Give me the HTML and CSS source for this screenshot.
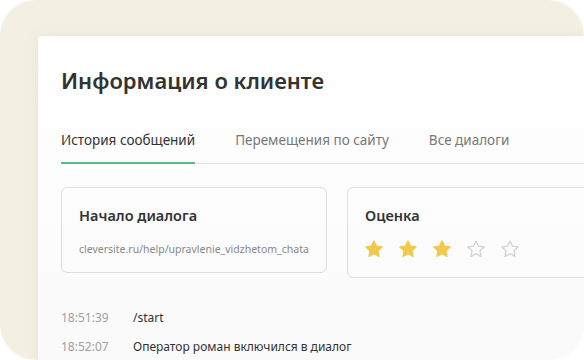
FILE: index.html
```html
<!DOCTYPE html>
<html lang="ru">

<head>
  <meta charset="UTF-8" />
  <meta name="viewport" content="width=device-width, initial-scale=1.0" />
  <title>Информация о клиенте</title>
  <link rel="stylesheet" href="styles.css">
</head>

<body>
  <div class="frame">
    <div class="panel">
      <h1 class="title">Информация о клиенте</h1>

      <div class="tabs">
        <div class="tab active">История сообщений</div>
        <div class="tab">Перемещения по сайту</div>
        <div class="tab">Все диалоги</div>
      </div>

      <div class="cards">
        <div class="card card-start">
          <h3>Начало диалога</h3>
          <div class="link">cleversite.ru/help/upravlenie_vidzhetom_chata</div>
        </div>
        <div class="card card-rate">
          <h3>Оценка</h3>
          <div class="stars">
            <svg class="star on" viewBox="0 0 24 24"><polygon points="12,2.5 15,8.6 21.7,9.5 16.8,14.2 18,20.8 12,17.6 6,20.8 7.2,14.2 2.3,9.5 9,8.6" /></svg>
            <svg class="star on" viewBox="0 0 24 24"><polygon points="12,2.5 15,8.6 21.7,9.5 16.8,14.2 18,20.8 12,17.6 6,20.8 7.2,14.2 2.3,9.5 9,8.6" /></svg>
            <svg class="star on" viewBox="0 0 24 24"><polygon points="12,2.5 15,8.6 21.7,9.5 16.8,14.2 18,20.8 12,17.6 6,20.8 7.2,14.2 2.3,9.5 9,8.6" /></svg>
            <svg class="star" viewBox="0 0 24 24"><polygon points="12,2.5 15,8.6 21.7,9.5 16.8,14.2 18,20.8 12,17.6 6,20.8 7.2,14.2 2.3,9.5 9,8.6" /></svg>
            <svg class="star" viewBox="0 0 24 24"><polygon points="12,2.5 15,8.6 21.7,9.5 16.8,14.2 18,20.8 12,17.6 6,20.8 7.2,14.2 2.3,9.5 9,8.6" /></svg>
          </div>
        </div>
      </div>

      <div class="log">
        <div class="time">18:51:39</div>
        <div class="msg">/start</div>
        <div class="time">18:52:07</div>
        <div class="msg">Оператор роман включился в диалог</div>
      </div>
    </div>
  </div>
</body>

</html>
```

FILE: styles.css
```css
body {
  margin: 0;
  background: #ffffff;
  font-family: "Noto Sans", "Open Sans", sans-serif;
  color: #333;
}

.frame {
  width: 584px;
  height: 360px;
  box-sizing: border-box;
  padding: 36px 0 0 38px;
  background: #f3efe2;
  border-radius: 36px;
  overflow: hidden;
}

.panel {
  height: 100%;
  padding-left: 23px;
  background: linear-gradient(180deg, #ffffff 0%, #fafafa 100%);
  border-radius: 4px 0 0 0;
  box-shadow: 0 0 14px rgba(120, 100, 60, 0.08);
}

.title {
  margin: 0;
  padding-top: 29px;
  font-size: 22px;
  line-height: 30px;
  font-weight: 600;
  color: #333;
}

.tabs {
  display: flex;
  gap: 40px;
  margin-top: 35px;
  border-bottom: 1px solid #e2e2e2;
}

.tab {
  font-size: 13.5px;
  line-height: 20px;
  padding-bottom: 13px;
  color: #777;
}

.tab.active {
  color: #333;
  box-shadow: inset 0 -2px 0 #5cb88a;
  margin-bottom: -1px;
  padding-bottom: 14px;
}

.cards {
  display: flex;
  gap: 20px;
  margin-top: 23px;
  align-items: flex-start;
}

.card {
  border: 1px solid #dedede;
  border-radius: 6px;
  padding: 17px 17px 0;
  box-sizing: border-box;
  flex-shrink: 0;
}

.card h3 {
  margin: 0;
  font-size: 14.5px;
  line-height: 20px;
  font-weight: 600;
  color: #333;
}

.card-start {
  width: 266px;
  height: 86px;
}

.card-rate {
  width: 260px;
  height: 91px;
}

.link {
  margin-top: 17px;
  font-size: 10.5px;
  color: #888;
}

.stars {
  display: flex;
  gap: 14px;
  margin-top: 14px;
  margin-left: -1px;
}

.star {
  width: 20px;
  height: 20px;
}

.star polygon {
  fill: none;
  stroke: #d3d3d3;
  stroke-width: 1.6;
  stroke-linejoin: round;
}

.star.on polygon {
  fill: #f2c94c;
  stroke: #f2c94c;
}

.log {
  display: grid;
  grid-template-columns: 72px 1fr;
  row-gap: 11px;
  margin-top: 31px;
  font-size: 12px;
  line-height: 18px;
}

.time {
  color: #a0a0a0;
}

.msg {
  color: #333;
}
```
